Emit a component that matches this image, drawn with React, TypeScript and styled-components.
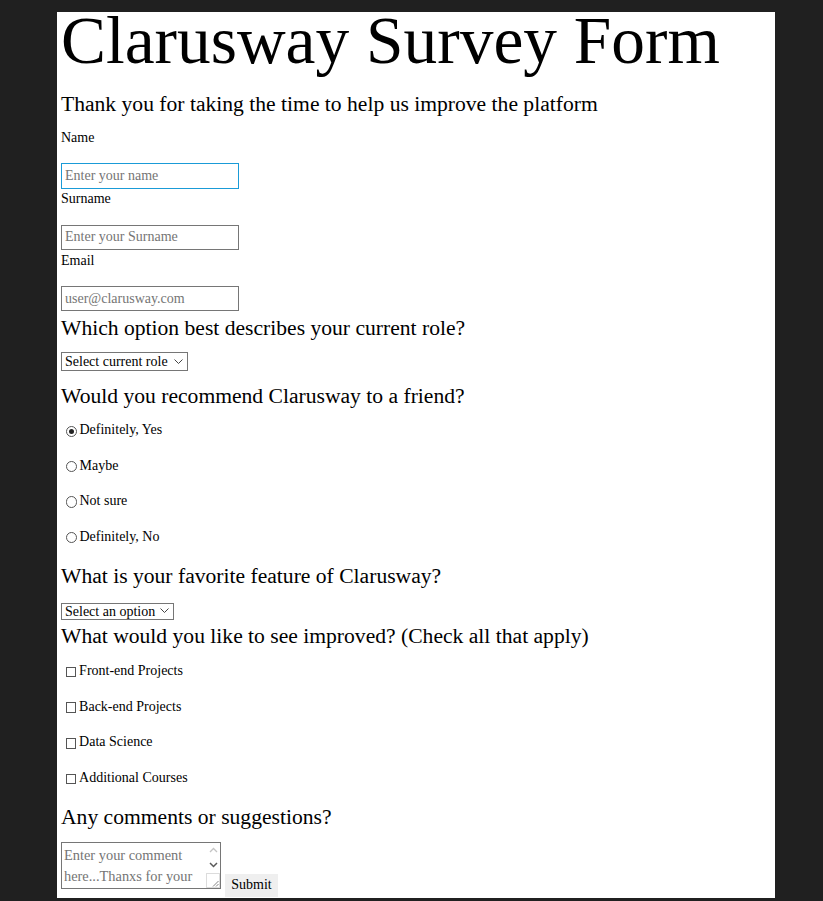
import React from "react";
import styled, { createGlobalStyle } from "styled-components";

const GlobalStyle = createGlobalStyle`
  html, body {
    margin: 0;
    padding: 0;
    background: #202020;
  }
  body {
    font-family: "Liberation Serif", "Times New Roman", serif;
    color: #000;
  }
  * { box-sizing: border-box; }
`;

const Page = styled.div`
  padding: 12px 0 0 57px;
`;

const Panel = styled.form`
  width: 718px;
  background: #fff;
  padding: 2px 4px 1px 4px;
  display: flex;
  flex-direction: column;
  align-items: flex-start;
`;

const Title = styled.h1`
  margin: 0 0 23.5px;
  font-size: 67.4px;
  line-height: 53px;
  font-weight: normal;
  white-space: nowrap;
`;

const Subtitle = styled.h2`
  margin: 1px 0 0;
  font-size: 21.6px;
  line-height: 25px;
  font-weight: normal;
  white-space: nowrap;
`;

const Question = styled.h3<{ $top: number }>`
  margin: ${(p) => p.$top}px 0 0;
  font-size: 21.6px;
  line-height: 25px;
  font-weight: normal;
  white-space: nowrap;
`;

const Fields = styled.div`
  margin-top: 13.5px;
  display: flex;
  flex-direction: column;
  gap: 2.7px;
`;

const Field = styled.div`
  display: flex;
  flex-direction: column;
  align-items: flex-start;
`;

const Label = styled.label`
  font-size: 14px;
  line-height: 16px;
  margin-bottom: 17.2px;
`;

const TextInput = styled.input<{ $focused?: boolean }>`
  width: 178px;
  height: 25.5px;
  margin: 0;
  padding: 0 3px;
  font-family: "Liberation Serif", "Times New Roman", serif;
  font-size: 14px;
  color: #000;
  background: #fff;
  border: 1px solid ${(p) => (p.$focused ? "#1a9bd7" : "#767676")};
  border-radius: 0;
  outline: none;
  &::placeholder {
    color: #757575;
  }
`;

const SelectWrap = styled.div<{ $top: number; $w: number; $h: number }>`
  position: relative;
  margin-top: ${(p) => p.$top}px;
  width: ${(p) => p.$w}px;
  height: ${(p) => p.$h}px;
`;

const Select = styled.select`
  appearance: none;
  -webkit-appearance: none;
  width: 100%;
  height: 100%;
  margin: 0;
  padding: 0 0 0 3px;
  font-family: "Liberation Serif", "Times New Roman", serif;
  font-size: 14px;
  line-height: 16px;
  color: #000;
  background: #fff;
  border: 1px solid #767676;
  border-radius: 0;
  outline: none;
`;

const Chevron = styled.svg`
  position: absolute;
  right: 5px;
  top: 50%;
  margin-top: -2px;
  pointer-events: none;
`;

const OptionList = styled.div<{ $top: number; $gap: number }>`
  margin-top: ${(p) => p.$top}px;
  display: flex;
  flex-direction: column;
  gap: ${(p) => p.$gap}px;
`;

const OptionRow = styled.label`
  display: flex;
  align-items: center;
  height: 16px;
  font-size: 14px;
  line-height: 16px;
  white-space: nowrap;
`;

const Radio = styled.input.attrs({ type: "radio" })`
  appearance: none;
  -webkit-appearance: none;
  width: 11.5px;
  height: 11.5px;
  margin: 2px 2.4px 0 4.6px;
  border: 1px solid #555;
  border-radius: 50%;
  background: #fff;
  display: grid;
  place-items: center;
  &:checked::after {
    content: "";
    width: 5.5px;
    height: 5.5px;
    border-radius: 50%;
    background: #222;
  }
`;

const Checkbox = styled.input.attrs({ type: "checkbox" })`
  appearance: none;
  -webkit-appearance: none;
  width: 10.5px;
  height: 10.5px;
  margin: 2px 2.8px 0 4.8px;
  border: 1px solid #555;
  border-radius: 0;
  background: #fff;
`;

const CommentRow = styled.div`
  margin-top: 11.5px;
  display: flex;
  align-items: flex-end;
  gap: 4px;
`;

const TextAreaBox = styled.div`
  position: relative;
  width: 160px;
  height: 47px;
  margin-bottom: 8px;
`;

const TextArea = styled.textarea`
  width: 100%;
  height: 100%;
  margin: 0;
  padding: 2px 18px 0 2px;
  resize: none;
  overflow: hidden;
  font-family: "Liberation Serif", "Times New Roman", serif;
  font-size: 14.4px;
  line-height: 21px;
  border: 1px solid #767676;
  border-radius: 0;
  outline: none;
  &::placeholder {
    color: #757575;
  }
`;

const Gutter = styled.div`
  position: absolute;
  top: 1px;
  right: 1px;
  bottom: 1px;
  width: 14px;
  display: flex;
  flex-direction: column;
  background: #fff;
  pointer-events: none;
`;

const GutterButton = styled.div`
  height: 15px;
  display: flex;
  align-items: center;
  justify-content: center;
`;

const Grip = styled.div`
  margin-top: auto;
  height: 15px;
  border: 1px solid #dcdcdc;
  display: flex;
  align-items: flex-end;
  justify-content: flex-end;
`;

const SubmitButton = styled.button`
  width: 53px;
  height: 23px;
  margin: 0;
  padding: 0;
  border: none;
  border-radius: 0;
  background: #efefef;
  font-family: "Liberation Serif", "Times New Roman", serif;
  font-size: 14px;
  color: #000;
`;

const ChevronDown = () => (
  <Chevron width="9" height="5" viewBox="0 0 9 5">
    <path d="M0.5 0.5 L4.5 4.5 L8.5 0.5" fill="none" stroke="#444" strokeWidth="1" />
  </Chevron>
);

const radios = ["Definitely, Yes", "Maybe", "Not sure", "Definitely, No"];
const checks = ["Front-end Projects", "Back-end Projects", "Data Science", "Additional Courses"];

export default function App() {
  return (
    <>
      <GlobalStyle />
      <Page>
        <Panel onSubmit={(e) => e.preventDefault()}>
          <Title>Clarusway Survey Form</Title>
          <Subtitle>Thank you for taking the time to help us improve the platform</Subtitle>
          <Fields>
            <Field>
              <Label htmlFor="name">Name</Label>
              <TextInput id="name" $focused placeholder="Enter your name" />
            </Field>
            <Field>
              <Label htmlFor="surname">Surname</Label>
              <TextInput id="surname" placeholder="Enter your Surname" />
            </Field>
            <Field>
              <Label htmlFor="email">Email</Label>
              <TextInput id="email" type="email" placeholder="user@clarusway.com" />
            </Field>
          </Fields>

          <Question $top={4.3}>Which option best describes your current role?</Question>
          <SelectWrap $top={10.8} $w={127} $h={19}>
            <Select defaultValue="">
              <option value="">Select current role</option>
              <option>Student</option>
              <option>Full Time Job</option>
              <option>Other</option>
            </Select>
            <ChevronDown />
          </SelectWrap>

          <Question $top={13}>Would you recommend Clarusway to a friend?</Question>
          <OptionList $top={13.8} $gap={19.4}>
            {radios.map((r, i) => (
              <OptionRow key={r}>
                <Radio name="recommend" defaultChecked={i === 0} />
                {r}
              </OptionRow>
            ))}
          </OptionList>

          <Question $top={19.3}>What is your favorite feature of Clarusway?</Question>
          <SelectWrap $top={12.8} $w={113} $h={17.5}>
            <Select defaultValue="">
              <option value="">Select an option</option>
              <option>Challenges</option>
              <option>Projects</option>
              <option>Community</option>
            </Select>
            <ChevronDown />
          </SelectWrap>

          <Question $top={4.6}>What would you like to see improved? (Check all that apply)</Question>
          <OptionList $top={14.4} $gap={19.6}>
            {checks.map((c) => (
              <OptionRow key={c}>
                <Checkbox />
                {c}
              </OptionRow>
            ))}
          </OptionList>

          <Question $top={19.6}>Any comments or suggestions?</Question>
          <CommentRow>
            <TextAreaBox>
              <TextArea placeholder="Enter your comment here...Thanxs for your feedback" />
              <Gutter>
                <GutterButton>
                  <svg width="9" height="6" viewBox="0 0 9 6">
                    <path d="M1 5 L4.5 1.5 L8 5" fill="none" stroke="#c4c4c4" strokeWidth="1.3" />
                  </svg>
                </GutterButton>
                <GutterButton>
                  <svg width="9" height="6" viewBox="0 0 9 6">
                    <path d="M1 1 L4.5 4.5 L8 1" fill="none" stroke="#5a5a5a" strokeWidth="1.5" />
                  </svg>
                </GutterButton>
                <Grip>
                  <svg width="7" height="7" viewBox="0 0 7 7">
                    <path d="M6.5 1 L1 6.5 M6.5 4 L4 6.5" fill="none" stroke="#777" strokeWidth="0.9" />
                  </svg>
                </Grip>
              </Gutter>
            </TextAreaBox>
            <SubmitButton type="submit">Submit</SubmitButton>
          </CommentRow>
        </Panel>
      </Page>
    </>
  );
}
